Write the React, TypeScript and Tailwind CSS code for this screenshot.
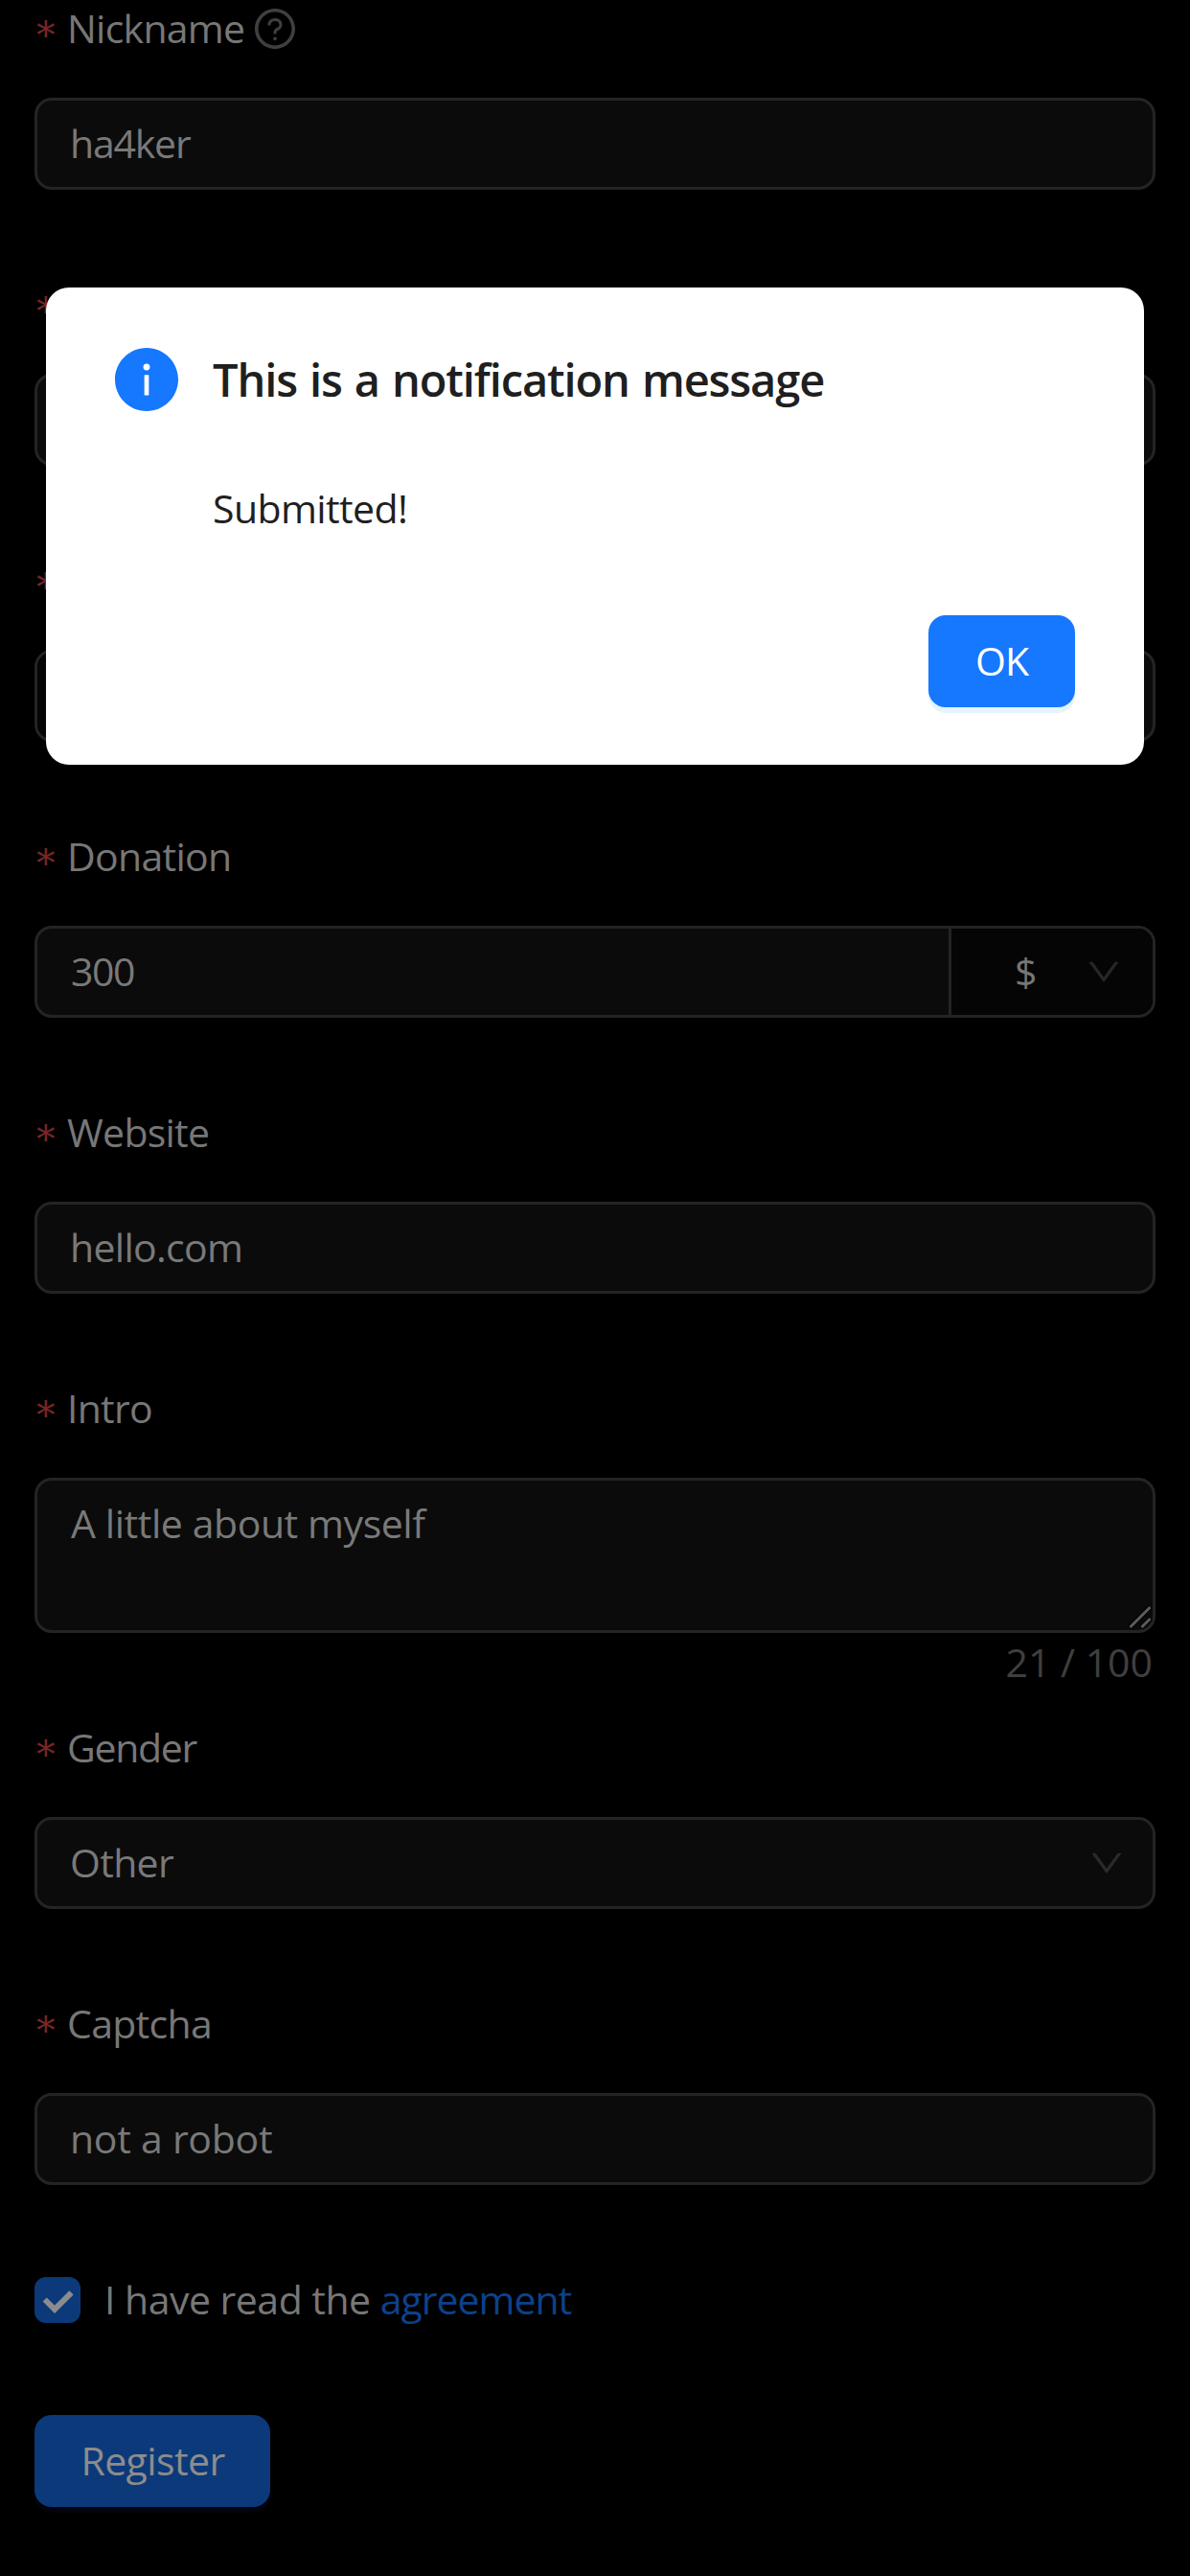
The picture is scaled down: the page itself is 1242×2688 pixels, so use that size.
import type { ReactNode } from "react";
import { AiFillInfoCircle, AiOutlineDown, AiOutlineQuestionCircle } from "react-icons/ai";

const ICON_BOX = "64 64 896 896";

function Field({ label, children }: { label?: ReactNode; children: ReactNode }) {
  return (
    <div className="mb-[72px]">
      <div className="mb-6 flex h-24 items-center">
        <span className="mt-[14px] h-[42px] w-[34px] pl-[2px] font-['DejaVu_Serif',serif] text-[39px] leading-[42px] text-[#792527]">
          *
        </span>
        <span className="flex items-center pb-[2px]">{label}</span>
      </div>
      {children}
    </div>
  );
}

function Input({ children }: { children?: ReactNode }) {
  return (
    <div className="flex h-24 items-center rounded-[18px] border-[3px] border-[#242424] bg-[#0b0b0b] pr-[33px] pb-[2px] pl-[34px] text-[#797979]">
      {children}
    </div>
  );
}

export default function App() {
  return (
    <div className="relative h-[2688px] w-[1242px] overflow-hidden bg-black font-['Open_Sans','Noto_Sans',sans-serif] text-[41px] leading-[66px] text-[#777777]">
      <form className="-mt-[18px] flex flex-col px-9">
        <Field
          label={
            <>
              <span className="tracking-[-0.75px]">Nickname</span>
              <AiOutlineQuestionCircle viewBox={ICON_BOX} className="mt-[2px] ml-[11px] size-[42px] text-[#3f3f3f]" />
            </>
          }
        >
          <Input>
            <span className="tracking-[-1.2px]">ha4ker</span>
          </Input>
        </Field>

        <Field>
          <Input />
        </Field>

        <Field>
          <div className="flex h-24 overflow-hidden rounded-[18px] border-[3px] border-[#242424] bg-[#0b0b0b]">
            <div className="w-[207px] border-r-[3px] border-[#242424] bg-[#050505]" />
          </div>
        </Field>

        <Field label={<span className="tracking-[-0.7px]">Donation</span>}>
          <div className="flex h-24 overflow-hidden rounded-[18px] border-[3px] border-[#242424] bg-[#0b0b0b]">
            <div className="flex flex-1 items-center pb-[2px] pl-[35px] text-[#797979]">
              <span className="tracking-[-1.45px]">300</span>
            </div>
            <div className="flex w-[213px] items-center justify-between border-l-[3px] border-[#242424] bg-[#050505] pr-[33px] pl-[66px]">
              <span className="pb-[2px] text-[#777777]">$</span>
              <AiOutlineDown viewBox={ICON_BOX} className="size-9 text-[#272727]" />
            </div>
          </div>
        </Field>

        <Field label={<span className="tracking-[-0.75px]">Website</span>}>
          <Input>
            <span className="tracking-[-0.7px]">hello.com</span>
          </Input>
        </Field>

        <Field label={<span className="tracking-[-0.75px]">Intro</span>}>
          <div className="relative h-[162px] rounded-[18px] border-[3px] border-[#242424] bg-[#0b0b0b] pt-[11px] pl-[35px] text-[#797979]">
            <span className="tracking-[-0.43px]">A little about myself</span>
            <svg viewBox="0 0 27 27" className="absolute right-0 bottom-0 size-[27px]" fill="none">
              <path d="M3 24.5 25 2.5M15 24.5 25 14.5" stroke="#050505" strokeWidth="6" />
              <path d="M3.5 24 24.5 3M15.5 24 24.5 15" stroke="#5c5c5c" strokeWidth="3" />
            </svg>
          </div>
          <div className="-mt-[3px] -mb-[63px] h-[66px] pr-[3px] text-right text-[#3f3f3f]">21 / 100</div>
        </Field>

        <Field label={<span className="tracking-[-1.3px]">Gender</span>}>
          <Input>
            <span className="flex-1 tracking-[-0.68px]">Other</span>
            <AiOutlineDown viewBox={ICON_BOX} className="mt-[2px] -mr-[3px] size-9 text-[#2b2b2b]" />
          </Input>
        </Field>

        <Field label={<span className="tracking-[-0.7px]">Captcha</span>}>
          <Input>
            <span className="tracking-[-0.27px]">not a robot</span>
          </Input>
        </Field>

        <div className="mb-[72px] flex h-24 items-center">
          <span className="flex size-12 items-center justify-center rounded-[12px] bg-[#0c397a]">
            <svg viewBox="0 0 48 48" className="size-12" fill="none">
              <path d="M10.7 23.5 21 33.8 38.5 16.3" stroke="#8c8c8c" strokeWidth="6" />
            </svg>
          </span>
          <span className="pb-[2px] pl-[25px] whitespace-pre">
            <span className="tracking-[-0.51px]">I have read the </span>
            <a className="tracking-[-1.02px] text-[#0c418c]">agreement</a>
          </span>
        </div>

        <button
          type="button"
          className="flex h-24 w-[246px] items-center justify-center rounded-[18px] bg-[#0c397a] pb-[2px] pl-px tracking-[-0.59px] text-[#8c8c8c] shadow-[0_6px_0_#01040c]"
        >
          Register
        </button>
      </form>

      <div
        role="dialog"
        className="absolute top-[300px] left-12 flex h-[498px] w-[1146px] flex-col rounded-[24px] bg-white px-[72px] pt-[60px] text-[#1f1f1f]"
      >
        <div className="flex h-[72px] items-center">
          <AiFillInfoCircle viewBox={ICON_BOX} className="size-[66px] text-[#1677ff]" />
          <h2 className="ml-9 pb-px text-[47px] leading-[72px] font-semibold tracking-[-1.12px] [word-spacing:2px]">
            This is a notification message
          </h2>
        </div>
        <p className="mt-[65px] ml-[102px] h-[67px] tracking-[-0.6px]">Submitted!</p>
        <button
          type="button"
          className="mt-[78px] flex h-24 w-[153px] items-center justify-center self-end rounded-[18px] bg-[#1677ff] pb-[2px] tracking-[-0.9px] text-white shadow-[0_6px_0_#e6f4ff]"
        >
          OK
        </button>
      </div>
    </div>
  );
}
